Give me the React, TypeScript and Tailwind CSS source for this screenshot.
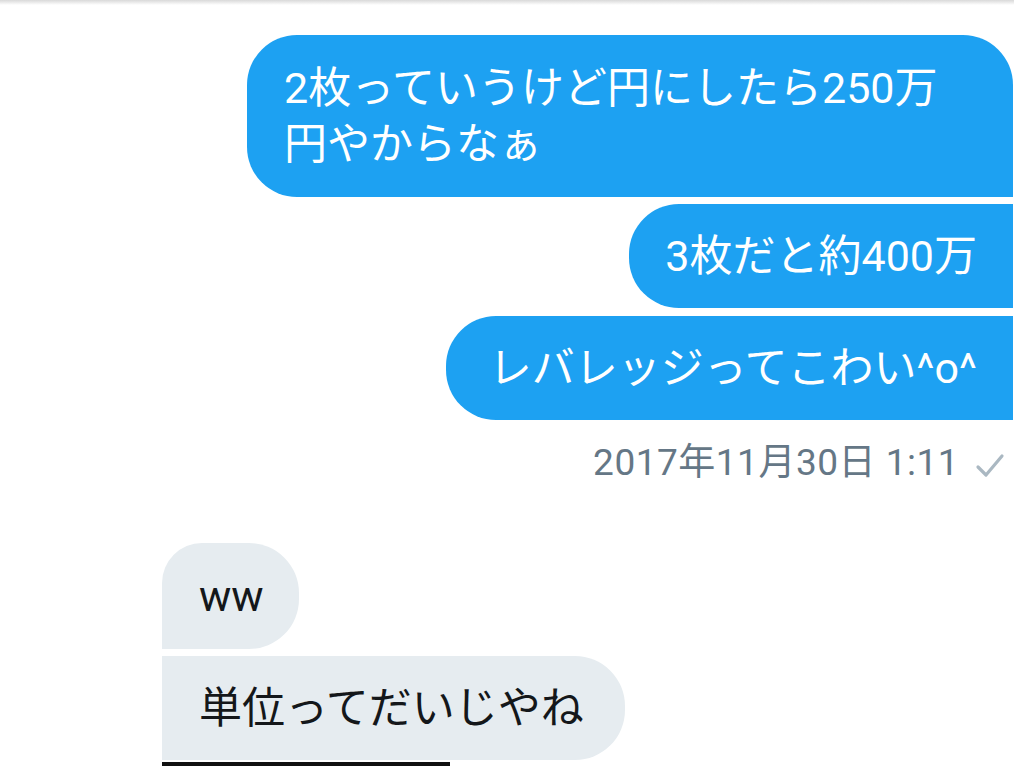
import React from "react";

const font = { fontFamily: 'Roboto, "Noto Sans CJK JP", sans-serif' };

export default function App() {
  return (
    <div className="w-[1014px] h-[768px] overflow-hidden bg-white relative" style={font}>
      <div className="h-[5px] bg-gradient-to-b from-[#d9d9d9] to-white" />
      <div className="flex flex-col items-end pr-[1px] pt-[30px] gap-[7px]">
        <div className="w-[766px] bg-[#1da1f2] text-white text-[43px] leading-[56px] px-[37px] py-[25px] rounded-l-[50px] rounded-tr-[50px]">
          2枚っていうけど円にしたら250万
          <br />
          円やからなぁ
        </div>
        <div className="bg-[#1da1f2] text-white text-[43px] leading-[56px] px-[36px] py-[24px] rounded-l-[50px]">
          3枚だと約400万
        </div>
        <div className="bg-[#1da1f2] text-white text-[43px] leading-[56px] pl-[43px] pr-[36px] py-[24px] rounded-l-[50px] mt-[1px]">
          レバレッジってこわい^o^
        </div>
        <div className="flex items-center gap-[16px] pr-[8px] mt-[16px] text-[#657786] text-[37px] leading-[40px] tracking-[0.5px]">
          <span>2017年11月30日 1:11</span>
          <svg width="30" height="26" viewBox="0 0 30 26" className="mt-[6px]">
            <polyline points="3,14 11,22 27,3" fill="none" stroke="#aab8c2" strokeWidth="3.2" strokeLinecap="round" strokeLinejoin="round" />
          </svg>
        </div>
      </div>
      <div className="flex flex-col items-start pl-[162px] mt-[60px]">
        <div className="bg-[#e6ecf0] text-[#14171a] text-[43px] leading-[56px] pl-[37px] pr-[35px] py-[25px] rounded-tl-[40px] rounded-r-[50px]">
          ww
        </div>
        <div className="bg-[#e6ecf0] text-[#14171a] text-[43px] leading-[56px] pl-[37px] pr-[41px] py-[24px] rounded-r-[50px] mt-[7px]">
          単位ってだいじやね
        </div>
        <div className="w-[288px] h-[4px] bg-[#111] mt-[2px]" />
      </div>
    </div>
  );
}
